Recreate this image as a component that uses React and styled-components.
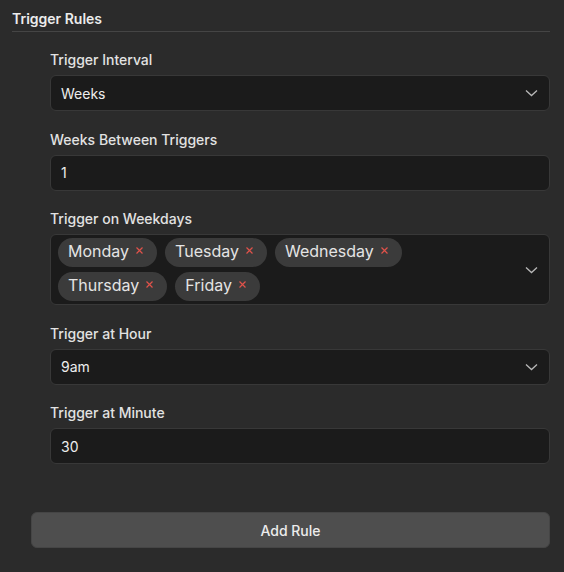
import React from "react";
import styled, { createGlobalStyle } from "styled-components";

const GlobalStyle = createGlobalStyle`
    body {
        margin: 0;
        background-color: #2b2b2b;
        font-family: Inter, "Noto Sans", sans-serif;
        color: #e6e6e6;
    }
`

const Panel = styled.section`
    display: flex;
    flex-direction: column;
    padding: 0 14px 0 12px;
    height: 572px;
    box-sizing: border-box;
`

const Heading = styled.h3`
    margin: 0;
    padding: 9px 0 2px;
    font-size: 14px;
    line-height: 20px;
    font-weight: 600;
    color: #ececec;
    border-bottom: 1px solid #454545;
`

const FieldList = styled.div`
    display: flex;
    flex-direction: column;
    gap: 18.5px;
    margin: 18px 0 0 38px;
`

const Field = styled.div`
    display: flex;
    flex-direction: column;
    gap: 5px;
`

const Label = styled.label`
    font-size: 14px;
    line-height: 20px;
    font-weight: 500;
    color: #e2e2e2;
`

const Box = styled.div`
    display: flex;
    align-items: center;
    justify-content: space-between;
    box-sizing: border-box;
    min-height: 36px;
    padding: ${(p) => (p.$multi ? "3px 11px 3px 7px" : "0 11px 0 10px")};
    background-color: #1b1b1b;
    border: 1px solid #383838;
    border-radius: 6px;
    font-size: 14px;
    color: #ededed;
`

const ChipWrap = styled.div`
    display: flex;
    flex-wrap: wrap;
    column-gap: 8px;
    row-gap: 5px;
    width: 360px;
`

const Chip = styled.span`
    display: inline-flex;
    align-items: flex-start;
    height: 29px;
    box-sizing: border-box;
    padding: 3px 14px 0 10px;
    background-color: #3b3b3b;
    border-radius: 15px;
    font-size: 16px;
    line-height: 20px;
    color: #e4e4e4;
`

const Remove = styled.span`
    margin-left: 7px;
    margin-top: 6px;
    width: 7px;
    height: 7px;
    display: inline-flex;
`

const Button = styled.button`
    margin: 48px 0 0 19px;
    height: 36px;
    background-color: #4e4e4e;
    border: 1px solid #454545;
    border-radius: 6px;
    font-family: inherit;
    font-size: 14px;
    font-weight: 500;
    color: #ececec;
`

const Chevron = () => (
    <svg width="13" height="8" viewBox="0 0 13 8" fill="none">
        <path d="M1 1.5l5.5 5 5.5-5" stroke="#b8b8b8" strokeWidth="1.3" />
    </svg>
)

const Cross = () => (
    <Remove>
        <svg width="7" height="7" viewBox="0 0 7 7">
            <path d="M0.5 0.5l6 6M6.5 0.5l-6 6" stroke="#e0524a" strokeWidth="1.2" />
        </svg>
    </Remove>
)

const days = ["Monday", "Tuesday", "Wednesday", "Thursday", "Friday"];

const App = () => {
    return (
        <>
            <GlobalStyle />
            <Panel>
                <Heading>Trigger Rules</Heading>
                <FieldList>
                    <Field>
                        <Label>Trigger Interval</Label>
                        <Box>Weeks<Chevron /></Box>
                    </Field>
                    <Field>
                        <Label>Weeks Between Triggers</Label>
                        <Box>1</Box>
                    </Field>
                    <Field>
                        <Label>Trigger on Weekdays</Label>
                        <Box $multi>
                            <ChipWrap>
                                {days.map((day) => (
                                    <Chip key={day}>{day}<Cross /></Chip>
                                ))}
                            </ChipWrap>
                            <Chevron />
                        </Box>
                    </Field>
                    <Field>
                        <Label>Trigger at Hour</Label>
                        <Box>9am<Chevron /></Box>
                    </Field>
                    <Field>
                        <Label>Trigger at Minute</Label>
                        <Box>30</Box>
                    </Field>
                </FieldList>
                <Button>Add Rule</Button>
            </Panel>
        </>
    );
}

export default App;
